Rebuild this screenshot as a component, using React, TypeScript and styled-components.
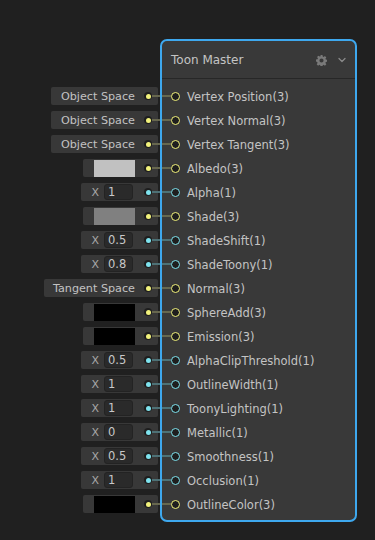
import React from "react";
import styled, { createGlobalStyle } from "styled-components";
import { ChevronDown } from "lucide-react";

const GlobalStyle = createGlobalStyle`
  html, body { margin: 0; padding: 0; background: #202020; }
  body { font-family: "DejaVu Sans", Verdana, sans-serif; }
`;

type Kind = "vec" | "float";

const YELLOW = "#f2f27c";
const CYAN = "#7fe3ee";
const WIRE_Y = "#67674e";
const WIRE_C = "#4d7176";

const Page = styled.div`
  width: 375px;
  height: 540px;
  background: #202020;
  display: flex;
  align-items: flex-start;
  padding-top: 39px;
  box-sizing: border-box;
`;

const Inputs = styled.div`
  width: 160px;
  padding-top: 45px;
  display: flex;
  flex-direction: column;
`;

const InputRow = styled.div`
  height: 24px;
  display: flex;
  align-items: center;
  justify-content: flex-end;
`;

const Field = styled.div<{ $pl: number }>`
  height: 18px;
  display: flex;
  align-items: center;
  background: #383838;
  border-radius: 2px;
  padding-left: ${(p) => p.$pl}px;
  box-sizing: border-box;
`;

const FieldText = styled.span`
  font-size: 11.2px;
  color: #c2c2c2;
  white-space: nowrap;
  margin-right: 9px;
  padding-top: 1px;
`;

const Swatch = styled.div<{ $c: string }>`
  width: 41px;
  height: 17px;
  background: ${(p) => p.$c};
  margin-right: 9px;
`;

const XLabel = styled.span`
  font-size: 11px;
  color: #a8a8a8;
  margin-right: 5px;
  padding-top: 1px;
`;

const NumInput = styled.div`
  width: 29px;
  height: 16px;
  box-sizing: border-box;
  background: #2a2a2a;
  border: 1px solid #232323;
  border-radius: 3px;
  font-size: 11.5px;
  color: #c8c8c8;
  padding-left: 3px;
  line-height: 15px;
  margin-right: 11px;
`;

const Dot = styled.div<{ $k: Kind }>`
  width: 8px;
  height: 8px;
  border-radius: 50%;
  background: #1e1e1e;
  display: flex;
  align-items: center;
  justify-content: center;
  flex-shrink: 0;
  &::after {
    content: "";
    width: 5px;
    height: 5px;
    border-radius: 50%;
    background: ${(p) => (p.$k === "vec" ? YELLOW : CYAN)};
  }
`;

const Wire = styled.div<{ $k: Kind; $w: number }>`
  width: ${(p) => p.$w}px;
  height: 2px;
  background: ${(p) => (p.$k === "vec" ? WIRE_Y : WIRE_C)};
  flex-shrink: 0;
`;

const Node = styled.div`
  width: 197px;
  height: 483px;
  box-sizing: border-box;
  border: 2px solid #3ea8ee;
  border-radius: 7px;
  background: #393939;
  display: flex;
  flex-direction: column;
  overflow: hidden;
`;

const Header = styled.div`
  height: 38px;
  box-sizing: border-box;
  border-bottom: 1px solid #272727;
  display: flex;
  align-items: center;
  padding: 1px 7px 0 9px;
`;

const Title = styled.div`
  flex: 1;
  font-size: 12px;
  color: #c4c4c4;
`;

const HeaderIcons = styled.div`
  display: flex;
  align-items: center;
  gap: 9px;
  color: #7a7a7a;
`;

const Ports = styled.div`
  padding-top: 5px;
  display: flex;
  flex-direction: column;
`;

const PortRow = styled.div`
  height: 24px;
  display: flex;
  align-items: center;
`;

const Port = styled.div<{ $k: Kind }>`
  width: 9px;
  height: 9px;
  box-sizing: border-box;
  border-radius: 50%;
  border: 1.5px solid ${(p) => (p.$k === "vec" ? YELLOW : CYAN)};
  background: #1e1e1e;
  margin-right: 7px;
  flex-shrink: 0;
`;

const Label = styled.span`
  font-size: 11.5px;
  color: #c4c4c4;
  white-space: nowrap;
  padding-top: 1px;
`;

type Src =
  | { t: "text"; v: string; pl: number }
  | { t: "color"; c: string }
  | { t: "num"; v: string };

type Row = { label: string; k: Kind; src: Src };

const rows: Row[] = [
  { label: "Vertex Position(3)", k: "vec", src: { t: "text", v: "Object Space", pl: 10 } },
  { label: "Vertex Normal(3)", k: "vec", src: { t: "text", v: "Object Space", pl: 10 } },
  { label: "Vertex Tangent(3)", k: "vec", src: { t: "text", v: "Object Space", pl: 10 } },
  { label: "Albedo(3)", k: "vec", src: { t: "color", c: "#c1c1c1" } },
  { label: "Alpha(1)", k: "float", src: { t: "num", v: "1" } },
  { label: "Shade(3)", k: "vec", src: { t: "color", c: "#808080" } },
  { label: "ShadeShift(1)", k: "float", src: { t: "num", v: "0.5" } },
  { label: "ShadeToony(1)", k: "float", src: { t: "num", v: "0.8" } },
  { label: "Normal(3)", k: "vec", src: { t: "text", v: "Tangent Space", pl: 9 } },
  { label: "SphereAdd(3)", k: "vec", src: { t: "color", c: "#000000" } },
  { label: "Emission(3)", k: "vec", src: { t: "color", c: "#000000" } },
  { label: "AlphaClipThreshold(1)", k: "float", src: { t: "num", v: "0.5" } },
  { label: "OutlineWidth(1)", k: "float", src: { t: "num", v: "1" } },
  { label: "ToonyLighting(1)", k: "float", src: { t: "num", v: "1" } },
  { label: "Metallic(1)", k: "float", src: { t: "num", v: "0" } },
  { label: "Smoothness(1)", k: "float", src: { t: "num", v: "0.5" } },
  { label: "Occlusion(1)", k: "float", src: { t: "num", v: "1" } },
  { label: "OutlineColor(3)", k: "vec", src: { t: "color", c: "#000000" } },
];

const Gear = () => (
  <svg width="11" height="11" viewBox="0 0 16 16" fill="currentColor">
    <path
      fillRule="evenodd"
      d="M6.6 0h2.8l.4 2.2 1.3.6 1.9-1.3 2 2-1.3 1.9.6 1.3 2.2.4v2.8l-2.2.4-.6 1.3 1.3 1.9-2 2-1.9-1.3-1.3.6-.4 2.2H6.6l-.4-2.2-1.3-.6-1.9 1.3-2-2 1.3-1.9-.6-1.3L0 9.4V6.6l2.2-.4.6-1.3-1.3-1.9 2-2 1.9 1.3 1.3-.6L6.6 0zM8 5a3 3 0 1 0 0 6 3 3 0 0 0 0-6z"
    />
  </svg>
);

function Source({ src }: { src: Src }) {
  if (src.t === "text") return <FieldText>{src.v}</FieldText>;
  if (src.t === "color") return <Swatch $c={src.c} />;
  return (
    <>
      <XLabel>X</XLabel>
      <NumInput>{src.v}</NumInput>
    </>
  );
}

export default function App() {
  return (
    <>
      <GlobalStyle />
      <Page>
        <Inputs>
          {rows.map((r) => (
            <InputRow key={r.label}>
              <Field $pl={r.src.t === "text" ? r.src.pl : r.src.t === "color" ? 11 : 10}>
                <Source src={r.src} />
                <Dot $k={r.k} />
                <Wire $k={r.k} $w={6} />
              </Field>
              <Wire $k={r.k} $w={2} />
            </InputRow>
          ))}
        </Inputs>
        <Node>
          <Header>
            <Title>Toon Master</Title>
            <HeaderIcons>
              <Gear />
              <ChevronDown size={12} strokeWidth={2.5} color="#8a8a8a" />
            </HeaderIcons>
          </Header>
          <Ports>
            {rows.map((r) => (
              <PortRow key={r.label}>
                <Wire $k={r.k} $w={9} />
                <Port $k={r.k} />
                <Label>{r.label}</Label>
              </PortRow>
            ))}
          </Ports>
        </Node>
      </Page>
    </>
  );
}
